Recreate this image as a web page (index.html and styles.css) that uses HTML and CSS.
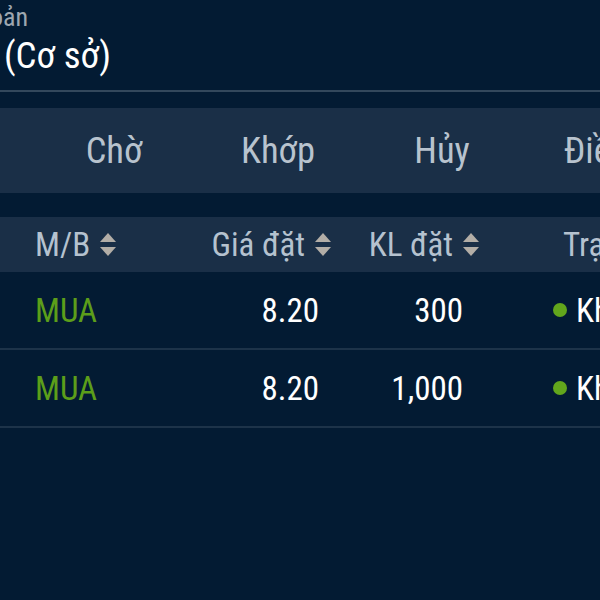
FILE: index.html
```html
<!DOCTYPE html>
<html lang="vi">
<head>
<meta charset="utf-8">
<link rel="stylesheet" href="styles.css">
</head>
<body>
<div class="screen">
  <section class="account">
    <div class="account-label">oản</div>
    <div class="account-name">(Cơ sở)</div>
  </section>
  <nav class="tabs">
    <div class="tab">Chờ</div>
    <div class="tab">Khớp</div>
    <div class="tab">Hủy</div>
    <div class="tab tab-last">Điều kiện</div>
  </nav>
  <div class="table">
    <div class="row head">
      <div class="cell c1">M/B <span class="sort"><i class="up"></i><i class="down"></i></span></div>
      <div class="cell c2">Giá đặt <span class="sort"><i class="up"></i><i class="down"></i></span></div>
      <div class="cell c3">KL đặt <span class="sort"><i class="up"></i><i class="down"></i></span></div>
      <div class="cell c4">Trạng thái</div>
    </div>
    <div class="row">
      <div class="cell c1 buy">MUA</div>
      <div class="cell c2 num">8.20</div>
      <div class="cell c3 num">300</div>
      <div class="cell c4 status"><span class="dot"></span>Khớp</div>
    </div>
    <div class="row">
      <div class="cell c1 buy">MUA</div>
      <div class="cell c2 num">8.20</div>
      <div class="cell c3 num">1,000</div>
      <div class="cell c4 status"><span class="dot"></span>Khớp</div>
    </div>
  </div>
</div>
</body>
</html>
```
FILE: styles.css
```css
* { box-sizing: border-box; margin: 0; padding: 0; }
html, body { width: 600px; height: 600px; overflow: hidden; background: #031b33; }
body { font-family: "Roboto Condensed", Roboto, sans-serif; color: #fff; }
.screen { width: 600px; height: 600px; overflow: hidden; }

.account { height: 92px; border-bottom: 2px solid #33485c; padding-top: 1px; }
.account-label { font-size: 26px; line-height: 32px; color: #9ea7b0; margin-left: -10px; white-space: nowrap; }
.account-name { font-size: 37px; line-height: 46px; color: #fff; padding-left: 4px; white-space: nowrap; }

.tabs { display: flex; margin-top: 16px; height: 85px; background: #1a2f47; align-items: center; padding-left: 32px; white-space: nowrap; }
.tab { flex: 0 0 164px; text-align: center; font-size: 36.5px; color: #b8c3ce; }
.tab-last { text-align: left; padding-left: 40px; flex: 0 0 auto; }

.table { margin-top: 24px; }
.row { display: grid; grid-template-columns: 181px 150px 148px 1fr; height: 78px; align-items: center; border-bottom: 2px solid #1d3349; white-space: nowrap; }
.row.head { height: 55px; background: #1a2f47; border-bottom: none; }
.cell { font-size: 33px; }
.head .cell { color: #b5c2cf; display: flex; align-items: center; gap: 10px; }
.c1 { padding-left: 35px; }
.head .c2, .head .c3 { justify-content: flex-end; }
.num { text-align: right; }
.c2.num { padding-right: 12px; }
.c3.num { padding-right: 16px; }
.c4 { padding-left: 84px; }
.status { display: flex; align-items: center; padding-left: 74px; gap: 9px; }
.buy { color: #5c9e1a; }

.sort { display: inline-flex; flex-direction: column; gap: 5px; width: 16px; }
.sort i { display: block; width: 0; height: 0; border-left: 8px solid transparent; border-right: 8px solid transparent; }
.sort .up { border-bottom: 9px solid #b3aea7; }
.sort .down { border-top: 9px solid #b3aea7; }

.dot { width: 14px; height: 14px; border-radius: 50%; background: #62a61c; flex: none; }
```
